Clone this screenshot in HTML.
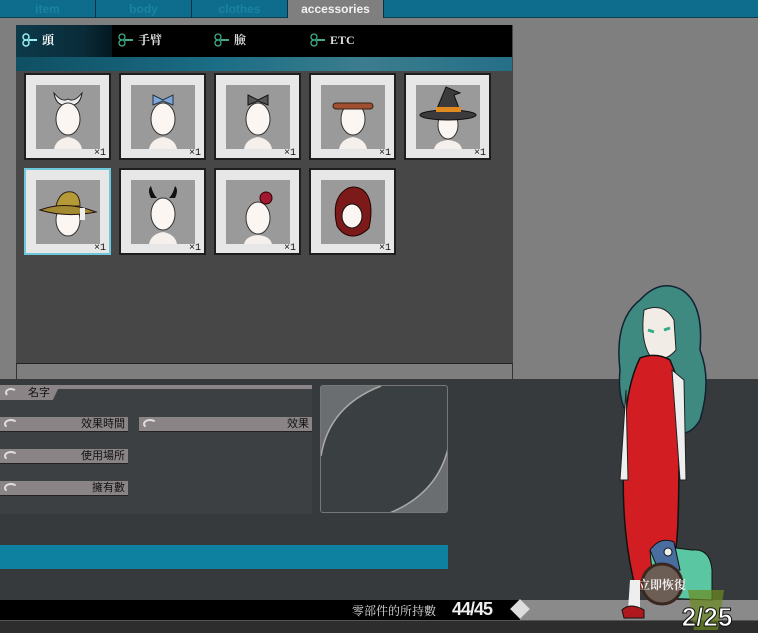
<!DOCTYPE html>
<html><head><meta charset="utf-8">
<style>
*{margin:0;padding:0;box-sizing:border-box}
body{width:758px;height:633px;overflow:hidden;background:#7f7f7f;font-family:"Liberation Sans","Noto Sans CJK TC",sans-serif;position:relative}
.abs{position:absolute}
#tabs{left:0;top:0;width:758px;height:18px;background:#0e6d8c;border-bottom:1px solid #0a3d50}
.tab{position:absolute;top:0;height:18px;border-right:1px solid #0a3340;color:#1a82a2;font-size:12px;font-weight:bold;text-align:center;line-height:18px}
#panel{left:16px;top:25px;width:497px;height:354px;background:#474747;border-bottom:1px solid #222}
#ptop{left:16px;top:25px;width:496px;height:32px;background:#000}
.pt{position:absolute;top:0;height:32px;color:#ddd;font-size:12px;font-weight:bold;line-height:30px;padding-left:26px;font-family:"Liberation Serif","Noto Serif CJK SC",serif}
.ic{position:absolute;left:6px;top:8px;width:16px;height:14px}
#strip{left:16px;top:57px;width:496px;height:14px;background:linear-gradient(90deg,#0f4f63,#1a6d85 40%,#3b7d8e 70%,#256f87)}
#pbot{left:16px;top:363px;width:497px;height:16px;background:#7e7e7e;border-top:1px solid #222;border-left:1px solid #333;border-right:1px solid #333}
.slot{position:absolute;width:87px;height:87px;background:#e7e7e7;border:2px solid #1e1e1e}
.slot.sel{border:2px solid #6fc7dc}
.slot .in{position:absolute;left:10px;top:10px;width:64px;height:64px;background:#9a9a9a;overflow:hidden}
.slot .x{position:absolute;right:3px;bottom:-1px;font-size:10px;color:#111;font-family:"Liberation Mono",monospace}
#lower{left:0;top:379px;width:758px;height:221px;background:#363a3d}
.lab{position:absolute;height:15px;background:#8a8486;border-bottom:1px solid #222;color:#111;font-size:11px;line-height:15px;text-align:right;padding-right:3px}
.lab i{position:absolute;left:4px;top:2px;width:14px;height:10px;border:2px solid #ddd;border-radius:50% 50% 0 50%;border-bottom-color:transparent;border-right-color:transparent}
#bar{left:0;top:600px;width:758px;height:20px;background:#000}
#bot{left:0;top:620px;width:758px;height:13px;background:#2d2d2d;border-top:1px solid #555}
</style></head><body>
<div id="tabs" class="abs">
<div class="tab" style="left:0;width:96px">item</div>
<div class="tab" style="left:96px;width:96px">body</div>
<div class="tab" style="left:192px;width:96px">clothes</div>
<div class="tab" style="left:288px;width:96px;background:#7f7f7f;color:#f2f2f2">accessories</div>
</div>
<div id="panel" class="abs"></div>
<div id="ptop" class="abs">
<div class="pt" style="left:0;width:96px;background:linear-gradient(90deg,#0c3a4a,#0a2b38 70%,#041820);color:#fff"><svg class="ic" viewBox="0 0 16 14"><circle cx="4" cy="4" r="3" fill="none" stroke="#9ee" stroke-width="1.5"/><circle cx="4" cy="10" r="3" fill="none" stroke="#9ee" stroke-width="1.5"/><path d="M7 7h8" stroke="#9ee" stroke-width="2"/></svg>頭</div>
<div class="pt" style="left:96px"><svg class="ic" viewBox="0 0 16 14"><circle cx="4" cy="4" r="3" fill="none" stroke="#4a8" stroke-width="1.3"/><circle cx="4" cy="10" r="3" fill="none" stroke="#4a8" stroke-width="1.3"/><path d="M7 7h8" stroke="#4a8" stroke-width="2"/></svg>手臂</div>
<div class="pt" style="left:192px"><svg class="ic" viewBox="0 0 16 14"><circle cx="4" cy="4" r="3" fill="none" stroke="#4a8" stroke-width="1.3"/><circle cx="4" cy="10" r="3" fill="none" stroke="#4a8" stroke-width="1.3"/><path d="M7 7h8" stroke="#4a8" stroke-width="2"/></svg>臉</div>
<div class="pt" style="left:288px"><svg class="ic" viewBox="0 0 16 14"><circle cx="4" cy="4" r="3" fill="none" stroke="#4a8" stroke-width="1.3"/><circle cx="4" cy="10" r="3" fill="none" stroke="#4a8" stroke-width="1.3"/><path d="M7 7h8" stroke="#4a8" stroke-width="2"/></svg>ETC</div>
</div>
<div id="strip" class="abs"></div>
<div id="pbot" class="abs"></div>

<div class="slot" style="left:24px;top:73px"><div class="in"><svg width="64" height="64"><path d="M18 8 Q26 18 32 14 Q38 18 46 8 Q44 22 32 20 Q20 22 18 8Z" fill="#eee" stroke="#222"/><ellipse cx="32" cy="34" rx="12" ry="16" fill="#fbf6f2" stroke="#333"/><path d="M18 64 Q20 54 32 52 Q44 54 46 64Z" fill="#f5f0ec"/></svg></div><span class="x">×1</span></div>
<div class="slot" style="left:119px;top:73px"><div class="in"><svg width="64" height="64"><path d="M22 10 L32 15 L42 10 L42 20 L32 16 L22 20Z" fill="#7fa6d8" stroke="#234"/><ellipse cx="32" cy="34" rx="12" ry="16" fill="#fbf6f2" stroke="#333"/><path d="M18 64 Q20 54 32 52 Q44 54 46 64Z" fill="#f5f0ec"/></svg></div><span class="x">×1</span></div>
<div class="slot" style="left:214px;top:73px"><div class="in"><svg width="64" height="64"><path d="M22 10 L32 15 L42 10 L42 20 L32 16 L22 20Z" fill="#555" stroke="#111"/><ellipse cx="32" cy="34" rx="12" ry="16" fill="#fbf6f2" stroke="#333"/><path d="M18 64 Q20 54 32 52 Q44 54 46 64Z" fill="#f5f0ec"/></svg></div><span class="x">×1</span></div>
<div class="slot" style="left:309px;top:73px"><div class="in"><svg width="64" height="64"><ellipse cx="32" cy="34" rx="12" ry="16" fill="#fbf6f2" stroke="#333"/><rect x="12" y="18" width="40" height="6" rx="3" fill="#a05030" stroke="#321"/><path d="M18 64 Q20 54 32 52 Q44 54 46 64Z" fill="#f5f0ec"/></svg></div><span class="x">×1</span></div>
<div class="slot" style="left:404px;top:73px"><div class="in"><svg width="64" height="64"><ellipse cx="32" cy="40" rx="10" ry="14" fill="#fbf6f2" stroke="#333"/><path d="M20 26 L30 2 L44 8 L38 10 L44 26Z" fill="#3d3a3e" stroke="#111"/><ellipse cx="32" cy="30" rx="28" ry="5" fill="#3d3a3e" stroke="#111"/><rect x="20" y="22" width="25" height="5" fill="#e08a20"/><path d="M18 64 Q20 56 32 55 Q44 56 46 64Z" fill="#f5f0ec"/></svg></div><span class="x">×1</span></div>
<div class="slot sel" style="left:24px;top:168px"><div class="in"><svg width="64" height="64"><ellipse cx="32" cy="40" rx="12" ry="16" fill="#fbf6f2" stroke="#333"/><path d="M20 26 Q24 10 36 12 Q44 14 44 26Z" fill="#b59a38" stroke="#321"/><path d="M4 30 Q30 20 60 32 Q30 38 4 30Z" fill="#a38a30" stroke="#211"/><rect x="44" y="28" width="5" height="12" fill="#eee"/></svg></div><span class="x">×1</span></div>
<div class="slot" style="left:119px;top:168px"><div class="in"><svg width="64" height="64"><path d="M20 18 Q16 10 20 6 Q22 14 26 18Z M44 18 Q48 10 44 6 Q42 14 38 18Z" fill="#111"/><ellipse cx="32" cy="34" rx="12" ry="16" fill="#fbf6f2" stroke="#333"/><path d="M18 64 Q20 54 32 52 Q44 54 46 64Z" fill="#f5f0ec"/></svg></div><span class="x">×1</span></div>
<div class="slot" style="left:214px;top:168px"><div class="in"><svg width="64" height="64"><ellipse cx="32" cy="38" rx="12" ry="16" fill="#fbf6f2" stroke="#333"/><circle cx="40" cy="18" r="6" fill="#a21830" stroke="#300"/><path d="M18 64 Q20 56 32 55 Q44 56 46 64Z" fill="#f5f0ec"/></svg></div><span class="x">×1</span></div>
<div class="slot" style="left:309px;top:168px"><div class="in"><svg width="64" height="64"><path d="M16 46 Q10 20 24 10 Q32 4 42 10 Q54 20 48 48 Q40 56 32 56 Q22 56 16 46Z" fill="#7c1a1a" stroke="#200"/><ellipse cx="31" cy="36" rx="10" ry="12" fill="#fbf6f2" stroke="#111"/></svg></div><span class="x">×1</span></div>

<div id="lower" class="abs"></div>
<div class="abs" style="left:0;top:386px;width:312px;height:128px;background:#3c4043"></div>
<div class="abs" style="left:0;top:385px;width:312px;height:15px;">
 <div style="position:absolute;left:0;top:0;width:312px;height:4px;background:#8a8486"></div>
 <div style="position:absolute;left:0;top:0;width:60px;height:15px;background:#8a8486;clip-path:polygon(0 0,100% 0,88% 100%,0 100%);font-size:11px;line-height:16px;padding-left:28px;color:#111">名字</div>
 <i style="position:absolute;left:5px;top:3px;width:12px;height:9px;border:2px solid #ddd;border-radius:50% 50% 0 50%;border-bottom-color:transparent;border-right-color:transparent"></i>
</div>
<div class="lab" style="left:0;top:417px;width:128px"><i></i>效果時間</div>
<div class="lab" style="left:139px;top:417px;width:173px"><i></i>效果</div>
<div class="lab" style="left:0;top:449px;width:128px"><i></i>使用場所</div>
<div class="lab" style="left:0;top:481px;width:128px"><i></i>擁有數</div>
<div class="abs" style="left:320px;top:385px;width:128px;height:128px;border:1px solid #777;border-radius:3px;background:#3a3f42;overflow:hidden">
<svg width="128" height="128"><path d="M0 0 H60 Q8 20 0 70Z" fill="#8a8e90" opacity=".6"/><path d="M128 128 H66 Q118 108 128 58Z" fill="#8a8e90" opacity=".6"/><path d="M60 0 Q8 20 0 70 M128 58 Q118 108 66 128" fill="none" stroke="#aaa" stroke-width="1.5"/></svg></div>
<div class="abs" style="left:0;top:545px;width:448px;height:24px;background:#0f81a0"></div>

<div id="bar" class="abs"></div>
<div class="abs" style="left:520px;top:600px;width:238px;height:20px;background:#8a8a8a"></div>
<div class="abs" style="left:352px;top:602px;color:#ddd;font-size:12px;font-family:'Liberation Serif','Noto Serif CJK TC',serif">零部件的所持數</div>
<div class="abs" style="left:452px;top:599px;color:#eee;font-size:18px;font-weight:bold;font-family:'Liberation Sans Narrow','Liberation Sans',sans-serif;letter-spacing:-1px">44/45</div>
<div class="abs" style="left:513px;top:602px;width:14px;height:14px;background:#ddd;transform:rotate(45deg)"></div>
<div id="bot" class="abs"></div>

<svg class="abs" style="left:600px;top:280px" width="158" height="353" viewBox="0 0 158 353">
<path d="M40 20 Q60 -2 82 10 Q104 24 100 70 Q112 100 100 140 Q88 160 70 150 L40 150 Q16 130 20 90 Q14 40 40 20Z" fill="#3f8a80" stroke="#123" stroke-width="1.5"/>
<path d="M44 30 Q64 22 74 40 L76 70 Q64 84 50 76 Q40 60 44 30Z" fill="#f2ece6" stroke="#222"/>
<path d="M48 50 l6 2 M64 50 l6 -2" stroke="#3a8" stroke-width="3"/>
<path d="M40 78 Q56 72 70 80 L78 100 Q80 180 78 240 Q76 300 60 310 L36 310 Q20 250 24 170 Q24 110 40 78Z" fill="#d21e22" stroke="#111" stroke-width="1.5"/>
<path d="M72 90 L84 100 L86 200 L80 200Z" fill="#eee" stroke="#222"/>
<path d="M26 110 L20 200 L28 200 Z" fill="#eee" stroke="#222"/>
<path d="M30 300 L28 330 L40 332 L40 300Z" fill="#eee"/>
<path d="M22 330 Q30 322 44 330 L44 338 L24 338Z" fill="#b01820" stroke="#111"/>
<path d="M50 270 Q64 258 76 268 L92 270 Q110 268 112 290 L112 320 L60 318 Q52 300 50 270Z" fill="#5ac6a2" stroke="#111"/>
<path d="M50 270 Q60 256 74 262 L80 290 L60 294Z" fill="#4a6da0" stroke="#111"/>
<circle cx="68" cy="272" r="4" fill="#eee" stroke="#111"/>
<circle cx="62" cy="304" r="20" fill="#6d5e55" stroke="#3a2820" stroke-width="3"/>
<text x="62" y="309" text-anchor="middle" fill="#eee" font-size="12" font-weight="bold" font-family="Liberation Serif,Noto Serif CJK TC,serif">立即恢復</text>
<path d="M88 310 L124 310 L118 350 L94 350Z" fill="#6b8a20" opacity=".7"/>
<text x="107" y="346" text-anchor="middle" fill="#fff" stroke="#111" stroke-width="1" font-size="26" font-weight="bold" font-family="Liberation Sans Narrow,Liberation Sans,sans-serif">2/25</text>
</svg>
</body></html>
